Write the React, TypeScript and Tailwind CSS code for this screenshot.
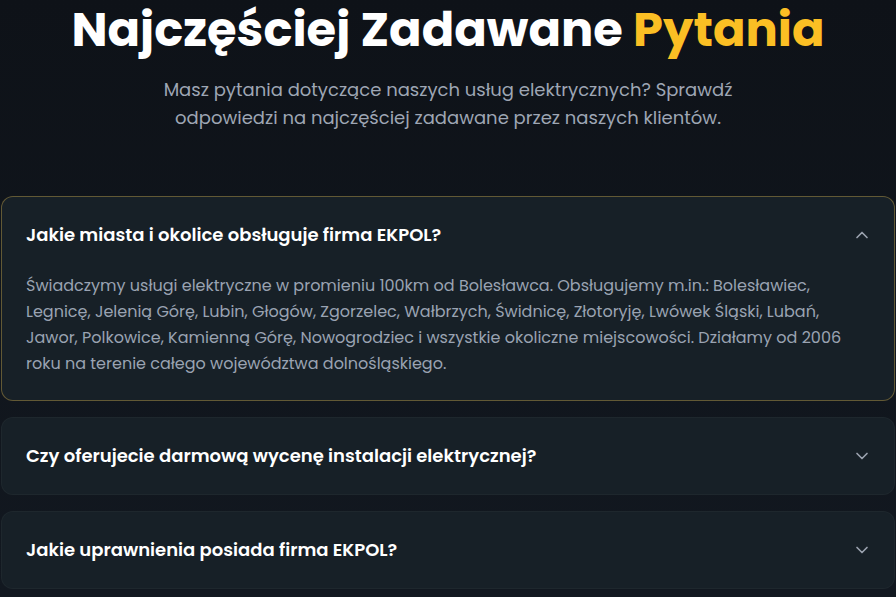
import { ChevronDown, ChevronUp } from "lucide-react";

interface FaqItem {
  question: string;
  answer: string;
}

const faqs: FaqItem[] = [
  {
    question: "Jakie miasta i okolice obsługuje firma EKPOL?",
    answer:
      "Świadczymy usługi elektryczne w promieniu 100km od Bolesławca. Obsługujemy m.in.: Bolesławiec, Legnicę, Jelenią Górę, Lubin, Głogów, Zgorzelec, Wałbrzych, Świdnicę, Złotoryję, Lwówek Śląski, Lubań, Jawor, Polkowice, Kamienną Górę, Nowogrodziec i wszystkie okoliczne miejscowości. Działamy od 2006 roku na terenie całego województwa dolnośląskiego.",
  },
  {
    question: "Czy oferujecie darmową wycenę instalacji elektrycznej?",
    answer: "",
  },
  {
    question: "Jakie uprawnienia posiada firma EKPOL?",
    answer: "",
  },
];

const font = "font-['Poppins','Inter','Noto_Sans',sans-serif]";

export default function App() {
  const openIndex = 0;

  return (
    <main className={`min-h-screen bg-gradient-to-b from-[#0e1218] to-[#121820] ${font}`}>
      <div className="max-w-[896px] mx-auto">
        <div className="text-center pt-[2px]">
          <h1 className="text-5xl font-bold text-white leading-[56px]">
            Najczęściej Zadawane <span className="text-[#fbbf24]">Pytania</span>
          </h1>
          <p className="mt-[18px] text-lg leading-7 text-[#9ea6b4] max-w-[600px] mx-auto">
            Masz pytania dotyczące naszych usług elektrycznych? Sprawdź odpowiedzi na
            najczęściej zadawane przez naszych klientów.
          </p>
        </div>

        <div className="mt-16 flex flex-col gap-4 px-px">
          {faqs.map((faq, i) => {
            const open = i === openIndex;
            return (
              <div
                key={faq.question}
                className={`rounded-xl border bg-[#172027] ${
                  open ? "border-[#d4b04a]/40" : "border-white/[0.03]"
                }`}
              >
                <button className="w-full flex items-center justify-between px-6 py-6 text-left">
                  <span className="text-lg font-semibold leading-7 text-white">
                    {faq.question}
                  </span>
                  {open ? (
                    <ChevronUp size={20} className="text-[#9ca3af] -mr-0.5" />
                  ) : (
                    <ChevronDown size={20} className="text-[#9ca3af] -mr-0.5" />
                  )}
                </button>
                {open && (
                  <div className="px-6 pb-[23px]">
                    <p className="text-base leading-[26px] text-[#9aa3b2]">{faq.answer}</p>
                  </div>
                )}
              </div>
            );
          })}
        </div>
      </div>
    </main>
  );
}
